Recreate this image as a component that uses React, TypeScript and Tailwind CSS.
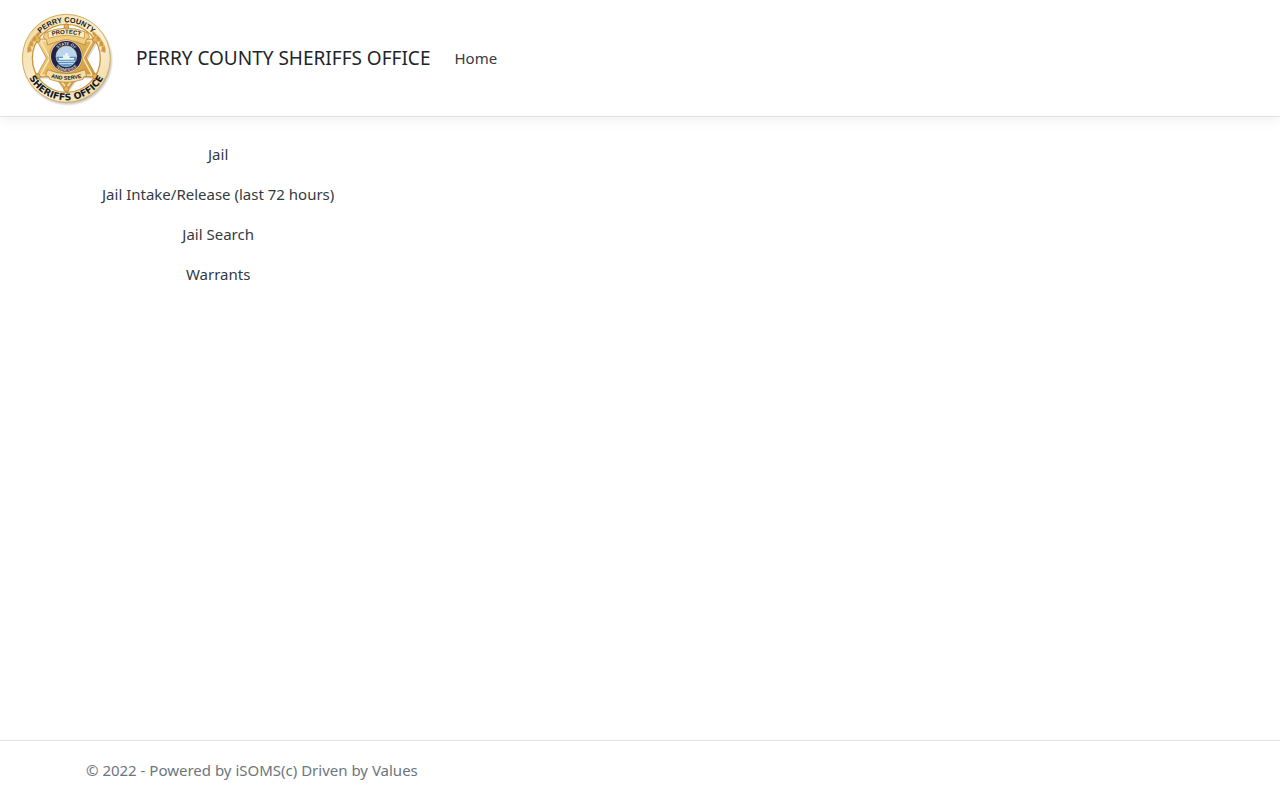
const links = ["Jail", "Jail Intake/Release (last 72 hours)", "Jail Search", "Warrants"];

function Badge() {
  return (
    <svg viewBox="0 0 300 300" className="size-[100px] shrink-0" role="img" aria-label="Perry County Sheriffs Office badge">
      <defs>
        <linearGradient id="ring" x1="0" y1="0" x2="1" y2="1">
          <stop offset="0" stopColor="#e6c172" />
          <stop offset="0.2" stopColor="#f6e3b4" />
          <stop offset="0.6" stopColor="#fbf1d6" />
          <stop offset="1" stopColor="#efd290" />
        </linearGradient>
        <linearGradient id="gold" x1="0" y1="0" x2="1" y2="1">
          <stop offset="0" stopColor="#f9e3a6" />
          <stop offset="0.5" stopColor="#e2b257" />
          <stop offset="1" stopColor="#c68d35" />
        </linearGradient>
        <radialGradient id="shade">
          <stop offset="0.9" stopColor="#77705f" stopOpacity="0.6" />
          <stop offset="1" stopColor="#77705f" stopOpacity="0" />
        </radialGradient>
        <path id="topArc" d="M43 151a108 108 0 0 1 216 0" />
        <path id="bottomArc" d="M25 151a126 126 0 0 0 252 0" />
        <path id="protectArc" d="M98 87Q151 68 204 87" />
        <path id="serveArc" d="M100 207Q151 223 202 207" />
        <path id="sealTop" d="M117 145a34 34 0 0 1 68 0" />
        <path id="sealBottom" d="M108 147a43 43 0 0 0 86 0" />
      </defs>
      <circle cx="155" cy="157" r="137" fill="url(#shade)" />
      <circle cx="151" cy="151" r="132" fill="url(#ring)" stroke="#d4ad5e" strokeWidth="3" />
      <circle cx="151" cy="151" r="102" fill="#fff" stroke="#c99640" strokeWidth="4" />
      <path d="M151 54l33 42 58-1-31 56 31 56-58-1-33 45-33-45-58 1 31-56-31-56 58 1z" fill="#8f8068" opacity="0.3" transform="translate(4 5)" />
      <path d="M151 50l34 44 58-2-32 58 32 58-58-2-34 47-34-47-58 2 32-58-32-58 58 2z" fill="url(#gold)" stroke="#bd8733" strokeWidth="2" />
      <path d="M151 61l28 40 50-3-28 52 28 52-50-3-28 42-28-42-50 3 28-52-28-52 50 3z" fill="none" stroke="#fbeabb" strokeWidth="4" />
      <g fill="#e2b254" stroke="#b47d2c" strokeWidth="2">
        <circle cx="151" cy="55" r="7" /><circle cx="151" cy="243" r="8" />
        <circle cx="65" cy="95" r="8" /><circle cx="237" cy="95" r="8" />
        <circle cx="65" cy="205" r="8" /><circle cx="237" cy="205" r="8" />
      </g>
      <g fill="#cf9744" stroke="#edc87c" strokeWidth="2">
        <path d="M34 134q-3-14 5-26 8 8 8 22z" /><path d="M38 115q0-14 11-23 6 10 2 24z" />
        <path d="M46 99q3-14 15-20 4 11-3 23z" /><path d="M57 84q6-12 17-15 1 10-9 19z" />
        <path d="M268 134q3-14-5-26-8 8-8 22z" /><path d="M264 115q0-14-11-23-6 10-2 24z" />
        <path d="M256 99q-3-14-15-20-4 11 3 23z" /><path d="M245 84q-6-12-17-15-1 10 9 19z" />
      </g>
      <path d="M88 74Q151 48 214 74l7 14-10 7-4 16q-56-27-112 0l-4-16-10-7z" fill="#efcf86" stroke="#ac772a" strokeWidth="2" />
      <path d="M96 71Q151 51 206 71l-1 20Q151 73 97 91z" fill="#faebc1" stroke="#c28a35" strokeWidth="2" />
      <path d="M95 185q56 24 112 0l5 18-9 4-2 7q-50 18-100 0l-2-7-10-5z" fill="#f5dda6" stroke="#ac772a" strokeWidth="2" />
      <circle cx="151" cy="145" r="50" fill="#efd495" stroke="#b78435" strokeWidth="2" />
      <circle cx="151" cy="145" r="46" fill="#202451" />
      <circle cx="151" cy="145" r="31" fill="#b9d6ec" stroke="#e9d9ad" strokeWidth="2" />
      <path d="M121 146h60q0 17-16 26-14 6-28 0-16-9-16-26z" fill="#5993c5" />
      <path d="M129 150h12v-8h7v-7h8v8h5v7h13v5h-45z" fill="#eff3ee" />
      <path d="M125 160h52M130 167h42" stroke="#d4e6ef" strokeWidth="3" />
      <g fontFamily="Liberation Sans, sans-serif" fontWeight="700" textAnchor="middle" fill="#171a1c">
        <text fontSize="22"><textPath href="#topArc" startOffset="50%">PERRY COUNTY</textPath></text>
        <text fontSize="28" fontFamily="DejaVu Sans, sans-serif"><textPath href="#bottomArc" startOffset="50%">SHERIFFS OFFICE</textPath></text>
        <text fontSize="18"><textPath href="#protectArc" startOffset="50%">PROTECT</textPath></text>
        <text fontSize="16"><textPath href="#serveArc" startOffset="50%">AND SERVE</textPath></text>
        <text fontSize="12" fill="#e8dfbf"><textPath href="#sealTop" startOffset="50%">STATE OF</textPath></text>
        <text fontSize="12" fill="#e8dfbf"><textPath href="#sealBottom" startOffset="50%">TENNESSEE</textPath></text>
      </g>
    </svg>
  );
}

export default function App() {
  return (
    <div className="flex min-h-screen flex-col bg-white font-['Noto_Sans',sans-serif] text-[15px] leading-6 text-[#343a40]">
      <header className="border-b border-[#dee2e6] shadow-[0_4px_12px_rgba(0,0,0,0.05)]">
        <nav className="flex items-center px-4 py-2">
          <a href="#" className="flex items-center gap-5 text-[19px] leading-8 text-[#212529]">
            <Badge />
            <span>PERRY COUNTY SHERIFFS OFFICE</span>
          </a>
          <a href="#" className="ml-4 px-2 py-2">Home</a>
        </nav>
      </header>
      <main className="mx-auto w-full max-w-[1140px] grow px-4 pt-[17px]">
        <ul className="flex w-fit flex-col text-center">
          {links.map((label) => (
            <li key={label}>
              <a href="#" className="block px-4 py-2">{label}</a>
            </li>
          ))}
        </ul>
      </main>
      <footer className="border-t border-[#dee2e6] leading-[59px] text-[#6c757d]">
        <div className="mx-auto w-full max-w-[1140px] px-4">© 2022 - Powered by iSOMS(c) Driven by Values</div>
      </footer>
    </div>
  );
}
